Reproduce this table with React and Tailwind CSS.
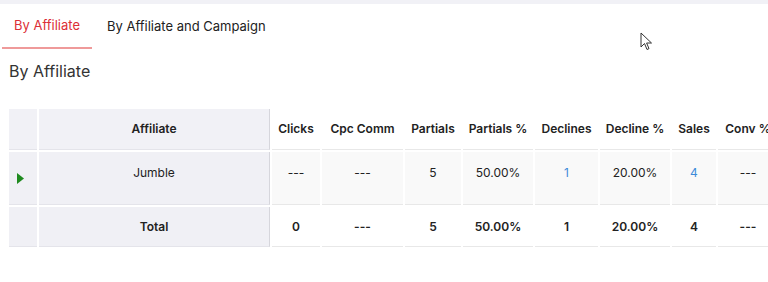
import React from "react";

const font = { fontFamily: "Inter, 'Open Sans', sans-serif" };

const cols = "grid-cols-[28px_231px_48px_81px_56px_70px_63px_70px_44px_60px]";

const headers = ["Clicks", "Cpc Comm", "Partials", "Partials %", "Declines", "Decline %", "Sales", "Conv %"];

const jumble = [
    { v: "---" },
    { v: "---" },
    { v: "5" },
    { v: "50.00%" },
    { v: "1", link: true },
    { v: "20.00%" },
    { v: "4", link: true },
    { v: "---" },
];

const totals = ["0", "---", "5", "50.00%", "1", "20.00%", "4", "---"];

const Cursor = () => (
    <svg
        className="absolute left-[640px] top-[32px]"
        width="14"
        height="19"
        viewBox="0 0 14 19"
    >
        <path
            d="M1 1 L1 15 L4.5 11.5 L7 17.5 L9 16.6 L6.6 11 L11.5 11 Z"
            fill="#fff"
            stroke="#333"
            strokeWidth="1"
            strokeLinejoin="round"
        />
    </svg>
);

export default function App() {
    return (
        <div className="relative w-[768px] h-[282px] overflow-hidden bg-white text-[#222]" style={font}>
            <div className="h-[4px] bg-[#f1f1f6]" />

            {/* tabs */}
            <div className="flex items-end h-[45px] pl-[2px]">
                <div className="w-[90px] h-full flex items-center justify-center border-b-2 border-[#ef9a9a] text-[13px] text-[#dc2f37] pt-[1px]">
                    By Affiliate
                </div>
                <div className="h-full flex items-center pl-[15px] text-[13px] text-[#222] pt-[1px]">
                    By Affiliate and Campaign
                </div>
            </div>

            <h2 className="pl-[9px] mt-[12px] text-[16px] leading-[20px] text-[#333]">By Affiliate</h2>

            {/* table */}
            <div className={`grid ${cols} gap-x-[2px] gap-y-[2px] ml-[9px] mt-[28px] w-max text-[12px]`}>
                <div className="h-[41px] bg-[#f1f1f6] border-b border-[#e4e4ea]" />
                <div className="h-[41px] bg-[#f1f1f6] border-b border-[#e4e4ea] border-r border-r-[#d6d6dc] flex items-center justify-center font-semibold">
                    Affiliate
                </div>
                {headers.map((h) => (
                    <div key={h} className="h-[41px] border-b border-[#e8e8e8] flex items-center justify-center font-semibold whitespace-nowrap">
                        {h}
                    </div>
                ))}

                <div className="h-[53px] bg-[#f0f0f5] border-b border-[#e4e4ea] flex items-center pl-[8px]">
                    <svg width="7" height="11" viewBox="0 0 7 11">
                        <path d="M0 0 L7 5.5 L0 11 Z" fill="#1f8a1f" />
                    </svg>
                </div>
                <div className="h-[53px] bg-[#f0f0f5] border-b border-[#e4e4ea] border-r border-r-[#d6d6dc] flex justify-center pt-[12px]">
                    Jumble
                </div>
                {jumble.map((c, i) => (
                    <div
                        key={i}
                        className={`h-[53px] bg-[#f9f9f9] border-b border-[#e8e8e8] flex justify-center pt-[12px] ${
                            c.link ? "text-[#3d8bd9]" : ""
                        }`}
                    >
                        {c.v}
                    </div>
                ))}

                <div className="h-[40px] bg-[#f0f0f5] border-b border-[#e4e4ea]" />
                <div className="h-[40px] bg-[#f0f0f5] border-b border-[#e4e4ea] border-r border-r-[#d6d6dc] flex items-center justify-center font-semibold">
                    Total
                </div>
                {totals.map((t, i) => (
                    <div key={i} className="h-[40px] border-b border-[#e8e8e8] flex items-center justify-center font-semibold">
                        {t}
                    </div>
                ))}
            </div>

            <Cursor />
        </div>
    );
}
